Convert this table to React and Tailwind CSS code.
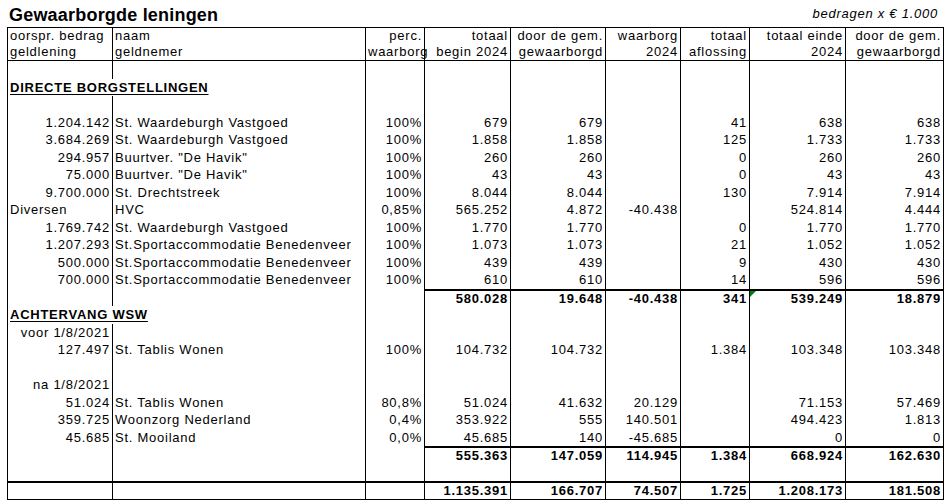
const GRID = 'grid grid-cols-[105px_253px_59px_86px_95px_75px_69px_96px_98px]'

const headers = [
  ['oorspr. bedrag', 'geldlening'],
  ['naam', 'geldnemer'],
  ['perc.', 'waarborg'],
  ['totaal', 'begin 2024'],
  ['door de gem.', 'gewaarborgd'],
  ['waarborg', '2024'],
  ['totaal', 'aflossing'],
  ['totaal einde', '2024'],
  ['door de gem.', 'gewaarborgd']
]

const empty = ['', '', '', '', '', '', '', '', '']

const rows = [
  { cells: empty },
  { section: 'DIRECTE BORGSTELLINGEN' },
  { cells: empty },
  { cells: ['1.204.142', 'St. Waardeburgh Vastgoed', '100%', '679', '679', '', '41', '638', '638'] },
  { cells: ['3.684.269', 'St. Waardeburgh Vastgoed', '100%', '1.858', '1.858', '', '125', '1.733', '1.733'] },
  { cells: ['294.957', 'Buurtver. "De Havik"', '100%', '260', '260', '', '0', '260', '260'] },
  { cells: ['75.000', 'Buurtver. "De Havik"', '100%', '43', '43', '', '0', '43', '43'] },
  { cells: ['9.700.000', 'St. Drechtstreek', '100%', '8.044', '8.044', '', '130', '7.914', '7.914'] },
  { cells: ['Diversen', 'HVC', '0,85%', '565.252', '4.872', '-40.438', '', '524.814', '4.444'], leftFirst: true },
  { cells: ['1.769.742', 'St. Waardeburgh Vastgoed', '100%', '1.770', '1.770', '', '0', '1.770', '1.770'] },
  { cells: ['1.207.293', 'St.Sportaccommodatie Benedenveer', '100%', '1.073', '1.073', '', '21', '1.052', '1.052'] },
  { cells: ['500.000', 'St.Sportaccommodatie Benedenveer', '100%', '439', '439', '', '9', '430', '430'] },
  { cells: ['700.000', 'St.Sportaccommodatie Benedenveer', '100%', '610', '610', '', '14', '596', '596'] },
  { cells: ['', '', '', '580.028', '19.648', '-40.438', '341', '539.249', '18.879'], total: true, flag: true },
  { section: 'ACHTERVANG WSW' },
  { cells: ['voor 1/8/2021', '', '', '', '', '', '', '', ''] },
  { cells: ['127.497', 'St. Tablis Wonen', '100%', '104.732', '104.732', '', '1.384', '103.348', '103.348'] },
  { cells: empty },
  { cells: ['na 1/8/2021', '', '', '', '', '', '', '', ''] },
  { cells: ['51.024', 'St. Tablis Wonen', '80,8%', '51.024', '41.632', '20.129', '', '71.153', '57.469'] },
  { cells: ['359.725', 'Woonzorg Nederland', '0,4%', '353.922', '555', '140.501', '', '494.423', '1.813'] },
  { cells: ['45.685', 'St. Mooiland', '0,0%', '45.685', '140', '-45.685', '', '0', '0'] },
  { cells: ['', '', '', '555.363', '147.059', '114.945', '1.384', '668.924', '162.630'], total: true },
  { cells: empty },
  { cells: ['', '', '', '1.135.391', '166.707', '74.507', '1.725', '1.208.173', '181.508'], grand: true }
]

function Row({ row }) {
  if (row.section) {
    return (
      <div className={`${GRID} h-[17.5px]`}>
        <div className="whitespace-nowrap px-[2px] font-bold underline decoration-1 underline-offset-[2px]">{row.section}</div>
        {empty.slice(1).map((_, i) => (
          <div key={i} className="border-r" />
        ))}
      </div>
    )
  }
  return (
    <div className={`${GRID} h-[17.5px]`}>
      {row.cells.map((c, i) => {
        const left = i === 1 || (i === 0 && row.leftFirst)
        const line = row.grand || (row.total && i >= 3)
        return (
          <div
            key={i}
            className={`relative whitespace-nowrap border-r px-[2px] ${left ? 'text-left' : 'text-right'} ${line ? 'border-t-2 leading-[15px]' : ''} ${row.total || row.grand ? 'font-bold' : ''}`}
          >
            {row.flag && i === 7 && (
              <svg className="absolute left-0 top-0" width="6" height="6" viewBox="0 0 6 6">
                <polygon points="0,0 6,0 0,6" fill="#008000" />
              </svg>
            )}
            {c}
          </div>
        )
      })}
    </div>
  )
}

export default function App() {
  return (
    <div className="h-[504px] w-[946px] overflow-hidden bg-white font-['Liberation_Sans',Arial,sans-serif] text-[13px] leading-[17.5px] tracking-[0.75px] text-black">
      <div className="flex h-[27px] items-start justify-between">
        <h1 className="pl-[9px] pt-[3px] text-[18px] leading-[24px] font-bold tracking-[0.2px]">Gewaarborgde leningen</h1>
        <p className="pr-[8px] pt-[6px] italic leading-[15px]">bedragen x € 1.000</p>
      </div>
      <div className="ml-[7px] w-[937px] border-b border-l">
        <div className={`${GRID} border-t border-b`}>
          {headers.map(([a, b], i) => (
            <div key={i} className={`border-r px-[2px] leading-[16px] ${i < 2 ? 'text-left' : 'text-right'}`}>
              <div>{a}</div>
              <div>{b}</div>
            </div>
          ))}
        </div>
        {rows.map((row, i) => (
          <Row key={i} row={row} />
        ))}
      </div>
    </div>
  )
}
